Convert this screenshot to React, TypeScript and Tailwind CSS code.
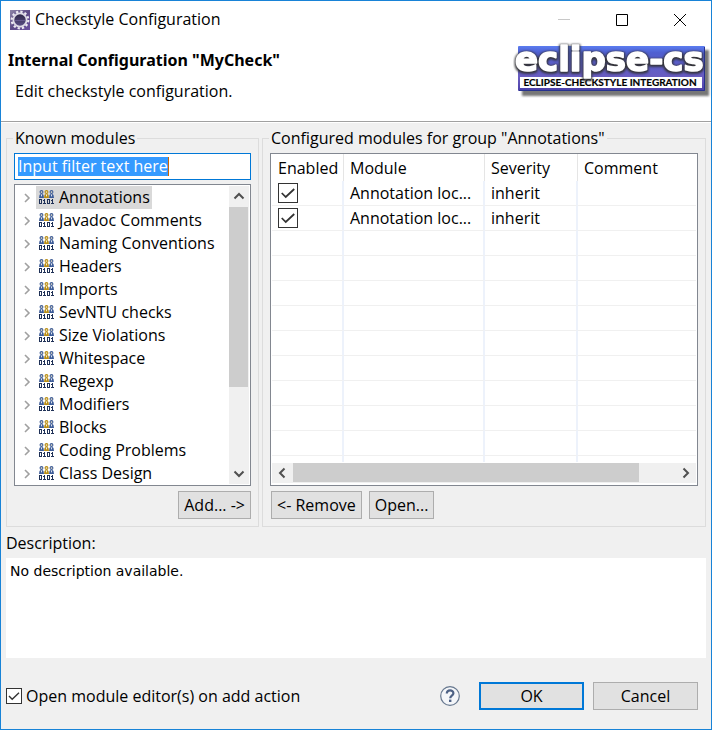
import { useEffect, useRef, useState } from 'react';

const MODULE_GROUPS = [
  'Annotations',
  'Javadoc Comments',
  'Naming Conventions',
  'Headers',
  'Imports',
  'SevNTU checks',
  'Size Violations',
  'Whitespace',
  'Regexp',
  'Modifiers',
  'Blocks',
  'Coding Problems',
  'Class Design',
];

interface ConfiguredModule {
  id: number;
  name: string;
  severity: string;
  comment: string;
  enabled: boolean;
}

const INITIAL_MODULES: ConfiguredModule[] = [
  { id: 1, name: 'Annotation loc...', severity: 'inherit', comment: '', enabled: true },
  { id: 2, name: 'Annotation loc...', severity: 'inherit', comment: '', enabled: true },
];

const EMPTY_ROWS = 10;

function Chevron({ className, d }: { className: string; d: string }) {
  return (
    <svg viewBox="0 0 12 12" className={className} fill="none" stroke="currentColor" aria-hidden="true">
      <path d={d} />
    </svg>
  );
}

function AppIcon() {
  return (
    <svg viewBox="0 0 20 20" className="w-5 h-5 shrink-0" aria-hidden="true">
      <defs>
        <linearGradient id="appBg" x1="0" y1="0" x2="1" y2="1">
          <stop offset="0" stopColor="#8f86a8" />
          <stop offset="0.5" stopColor="#5d4a86" />
          <stop offset="1" stopColor="#6b4fa0" />
        </linearGradient>
        <linearGradient id="appHole" x1="0" y1="0" x2="0" y2="1">
          <stop offset="0" stopColor="#2c2545" />
          <stop offset="1" stopColor="#5e5189" />
        </linearGradient>
      </defs>
      <rect width="20" height="20" fill="url(#appBg)" />
      <circle cx="10" cy="10" r="8.3" fill="none" stroke="#ece9f2" strokeWidth="2.2" strokeDasharray="2.3 2.05" />
      <circle cx="10" cy="10" r="6.6" fill="url(#appHole)" stroke="#dedae6" strokeWidth="1.8" />
      <path d="M5 10.5h10" stroke="#6d6096" strokeWidth="0.8" />
    </svg>
  );
}

function Logo() {
  return (
    <svg viewBox="0 0 198 60" className="w-[198px] h-[60px] shrink-0" role="img" aria-label="eclipse-cs">
      <defs>
        <linearGradient id="logoBg" x1="0" y1="0" x2="0" y2="1">
          <stop offset="0" stopColor="#5b7df0" />
          <stop offset="0.15" stopColor="#4f5fd0" />
          <stop offset="0.7" stopColor="#6a5cc0" />
          <stop offset="1" stopColor="#4a3fa8" />
        </linearGradient>
        <filter id="soft" x="-5%" y="-20%" width="110%" height="140%">
          <feGaussianBlur stdDeviation="0.9" />
        </filter>
        <filter id="glow" x="-5%" y="-20%" width="110%" height="140%" colorInterpolationFilters="sRGB">
          <feMorphology in="SourceAlpha" operator="dilate" radius="1" />
          <feOffset dx="0" dy="1" />
          <feGaussianBlur stdDeviation="0.8" />
          <feColorMatrix values="0 0 0 0 0.2  0 0 0 0 0.2  0 0 0 0 0.22  0 0 0 1 0" />
          <feMerge>
            <feMergeNode />
            <feMergeNode in="SourceGraphic" />
          </feMerge>
        </filter>
      </defs>
      <rect x="9" y="12" width="187" height="46" fill="#777" filter="url(#soft)" />
      <rect x="5" y="8" width="187" height="45" rx="1" fill="url(#logoBg)" />
      <path d="M6 52.5h185.5V9" fill="none" stroke="#26318f" />
      <rect x="7" y="39" width="182" height="11" fill="#fff" />
      <text
        x="97"
        y="48"
        textAnchor="middle"
        fontFamily="Lato, sans-serif"
        fontWeight="700"
        fontSize="10"
        fill="#000"
        stroke="#000"
        strokeWidth="0.2"
      >
        ECLIPSE-CHECKSTYLE INTEGRATION
      </text>
      <text
        x="2"
        y="33"
        fontFamily="DejaVu Sans, sans-serif"
        fontWeight="700"
        fontSize="34"
        fill="#fff"
        stroke="#fff"
        strokeWidth="1.6"
        strokeLinejoin="round"
        filter="url(#glow)"
      >
        eclipse-cs
      </text>
    </svg>
  );
}

// Three people standing over a row of binary digits
function ModuleGroupIcon() {
  const people = [
    { x: 2.5, color: '#3d5c98' },
    { x: 12.5, color: '#3d5c98' },
    { x: 7.5, color: '#b98d14' },
  ];

  return (
    <svg viewBox="0 0 15 15" className="w-[15px] h-[15px] shrink-0" aria-hidden="true">
      {people.map(({ x, color }) => (
        <g key={x} fill={color}>
          <path d={`M${x - 2.5} 8 L${x - 2} 5 L${x - 1} 4 h2 L${x + 2} 5 L${x + 2.5} 8z`} />
          <path d={`M${x - 0.7} 4.6 L${x} 7 L${x + 0.7} 4.6z`} fill="#fff" />
          <circle cx={x} cy="2" r="1.4" fill="#f3e9c8" stroke={color} strokeWidth="1.1" />
        </g>
      ))}
      <g fill="none" stroke="#1f3157" strokeWidth="1" shapeRendering="crispEdges">
        <rect x="0.5" y="9.5" width="2" height="4" />
        <path d="M4 10.5h1.5M5.5 9V14M4 13.5h3" />
        <rect x="8.5" y="9.5" width="2" height="4" />
        <path d="M12 10.5h1.5M13.5 9V14M12 13.5h3" />
      </g>
    </svg>
  );
}

interface CheckboxProps {
  id?: string;
  label?: string;
  checked: boolean;
  large?: boolean;
  onChange: () => void;
}

function Checkbox({ id, label, checked, large, onChange }: CheckboxProps) {
  return (
    <span className={`grid shrink-0 ${large ? 'w-5 h-5' : 'w-4 h-4'}`}>
      <input
        id={id}
        type="checkbox"
        aria-label={label}
        checked={checked}
        onChange={onChange}
        className="appearance-none [grid-area:1/1] w-full h-full bg-white border border-[#333]"
      />
      {checked && (
        <svg
          viewBox="0 0 16 16"
          className="[grid-area:1/1] w-full h-full pointer-events-none"
          fill="none"
          stroke="#333"
          strokeWidth="1.4"
          aria-hidden="true"
        >
          <path d="M3 8l3.2 3.2L13 4.8" />
        </svg>
      )}
    </span>
  );
}

const buttonClass = 'h-7 bg-[#e1e1e1] border border-[#adadad] whitespace-nowrap';
const headClass = 'h-[27px] pt-px pl-1.5 font-normal text-left border-r border-[#e5e5e5] bg-clip-padding';
const cellClass = 'h-[25px] pl-1.5 border-b border-b-[#f0f0f0] border-r-2 border-r-[#edf2fb] whitespace-nowrap';

export default function App() {
  const [filter, setFilter] = useState('Input filter text here');
  const [selected, setSelected] = useState('Annotations');
  const [modules, setModules] = useState(INITIAL_MODULES);
  const [openOnAdd, setOpenOnAdd] = useState(true);
  const filterRef = useRef<HTMLInputElement>(null);

  useEffect(() => {
    filterRef.current?.focus();
    filterRef.current?.select();
  }, []);

  const toggleModule = (id: number) => {
    setModules(modules.map((m) => (m.id === id ? { ...m, enabled: !m.enabled } : m)));
  };

  return (
    <div className="min-h-screen flex flex-col bg-[#f0f0f0] border border-[#1883d7] text-black text-base leading-[23px] font-['Open_Sans',sans-serif]">
      {/* Title bar */}
      <div className="flex items-center h-[37px] pl-[9px] pr-0.5 bg-white">
        <AppIcon />
        <span className="ml-[5px] flex-1">Checkstyle Configuration</span>
        <button aria-label="Minimize" className="w-[58px] h-full flex items-center justify-center text-[#c8c8c8]">
          <Chevron className="w-3 h-3" d="M0 5.5h12" />
        </button>
        <button aria-label="Maximize" className="w-[58px] h-full flex items-center justify-center">
          <Chevron className="w-3 h-3" d="M0.5 0.5h11v11h-11z" />
        </button>
        <button aria-label="Close" className="w-[58px] h-full flex items-center justify-center">
          <Chevron className="w-3 h-3" d="M0 0l12 12M12 0L0 12" />
        </button>
      </div>

      {/* Header */}
      <header className="flex items-start justify-between h-[84px] pl-[7px] bg-white border-b border-[#a0a0a0]">
        <div className="pt-[11px]">
          <h1 className="font-bold font-['Noto_Sans',sans-serif]">Internal Configuration "MyCheck"</h1>
          <p className="mt-2 pl-[7px]">Edit checkstyle configuration.</p>
        </div>
        <Logo />
      </header>

      <main className="flex flex-col px-[5px] pt-1 border-t border-white">
        <div className="flex gap-[3px]">
          {/* Known modules */}
          <fieldset className="w-[253px] shrink-0 border border-[#dcdcdc] px-[7px] pt-[3px] pb-[7px]">
            <legend className="-ml-px px-0.5">Known modules</legend>
            <div className="flex items-center h-[27px] px-[3px] bg-white border border-[#0078d7]">
              <input
                ref={filterRef}
                aria-label="Filter"
                value={filter}
                onChange={(e) => setFilter(e.target.value)}
                className="field-sizing-content h-[19px] leading-[19px] outline-none selection:bg-[#3399ff]/99 selection:text-white"
              />
              <span className="w-px h-[19px] bg-[#cc6600]"></span>
            </div>

            <div className="flex justify-between h-[302px] mt-1 bg-white border border-[#828790] overflow-hidden">
              <ul role="tree" aria-label="Known modules" className="pt-px">
                {MODULE_GROUPS.map((group) => (
                  <li
                    key={group}
                    role="treeitem"
                    aria-selected={selected === group}
                    onClick={() => setSelected(group)}
                    className="flex items-center h-[23px] pl-1.5"
                  >
                    <Chevron className="w-3 h-3 mr-[3px] text-[#a0a0a0] stroke-[1.6]" d="M4 2l4 4-4 4" />
                    <span
                      className={`flex items-center h-full gap-[5px] pl-[3px] pr-0.5 ${
                        selected === group ? 'bg-[#d9d9d9]' : ''
                      }`}
                    >
                      <ModuleGroupIcon />
                      {group}
                    </span>
                  </li>
                ))}
              </ul>
              <div className="flex flex-col w-5 my-px mr-px bg-[#f0f0f0] text-[#505050]">
                <Chevron className="w-3 h-[21px] mx-auto stroke-2" d="M1.5 8l4.5-4.5L10.5 8" />
                <div className="h-[180px] mr-px bg-[#cdcdcd]"></div>
                <Chevron className="w-3 h-[21px] mx-auto mt-auto stroke-2" d="M1.5 4L6 8.5 10.5 4" />
              </div>
            </div>

            <div className="flex justify-end mt-[5px]">
              <button className={`${buttonClass} px-[5px]`}>Add... -&gt;</button>
            </div>
          </fieldset>

          {/* Configured modules */}
          <fieldset className="flex-1 min-w-0 border border-[#dcdcdc] px-[7px] pt-[3px] pb-[7px]">
            <legend className="-ml-px px-0.5">Configured modules for group "Annotations"</legend>
            <div className="flex flex-col h-[333px] px-px pb-0.5 bg-white border border-[#828790]">
              <div className="flex-1 min-h-0 overflow-hidden">
                <table className="w-full table-fixed border-separate border-spacing-0">
                  <thead>
                    <tr>
                      <th className={`${headClass} w-[72px]`}>Enabled</th>
                      <th className={`${headClass} w-[141px]`}>Module</th>
                      <th className={`${headClass} w-[93px]`}>Severity</th>
                      <th className="h-[27px] pt-px pl-1.5 font-normal text-left">Comment</th>
                    </tr>
                  </thead>
                  <tbody>
                    {modules.map((module) => (
                      <tr key={module.id}>
                        <td className={cellClass}>
                          <Checkbox
                            large
                            label="Enabled"
                            checked={module.enabled}
                            onChange={() => toggleModule(module.id)}
                          />
                        </td>
                        <td className={cellClass}>{module.name}</td>
                        <td className={cellClass}>{module.severity}</td>
                        <td className="h-[25px] pl-1.5 border-b border-[#f0f0f0]">{module.comment}</td>
                      </tr>
                    ))}
                    {Array.from({ length: EMPTY_ROWS }, (_, i) => (
                      <tr key={i}>
                        <td className={cellClass}></td>
                        <td className={cellClass}></td>
                        <td className={cellClass}></td>
                        <td className="h-[25px] border-b border-[#f0f0f0]"></td>
                      </tr>
                    ))}
                  </tbody>
                </table>
              </div>
              <div className="flex items-center h-5 mt-px bg-[#f0f0f0] text-[#505050]">
                <Chevron className="w-[21px] h-3 stroke-2" d="M8 1.5L3.5 6 8 10.5" />
                <div className="w-[346px] h-[19px] mb-px bg-[#cdcdcd]"></div>
                <Chevron className="w-[21px] h-3 ml-auto stroke-2" d="M4 1.5L8.5 6 4 10.5" />
              </div>
            </div>

            <div className="flex gap-[7px] mt-[5px] pl-px">
              <button className={`${buttonClass} px-[5px]`}>&lt;- Remove</button>
              <button className={`${buttonClass} px-[5px]`}>Open...</button>
            </div>
          </fieldset>
        </div>

        {/* Description */}
        <h2 className="mt-[5px] h-[26px]">Description:</h2>
        <div className="h-[100px] px-1 py-0.5 bg-white font-['DejaVu_Sans',sans-serif] text-sm leading-[23px]">
          No description available.
        </div>
      </main>

      {/* Footer */}
      <footer className="flex items-center mt-6 pl-[5px] pr-[13px]">
        <Checkbox id="open-on-add" checked={openOnAdd} onChange={() => setOpenOnAdd(!openOnAdd)} />
        <label htmlFor="open-on-add" className="ml-1 flex-1">
          Open module editor(s) on add action
        </label>
        <button aria-label="Help" className="mr-[19px]">
          <svg viewBox="0 0 20 20" className="w-5 h-5" fill="none" aria-hidden="true">
            <circle cx="10" cy="10" r="9.3" fill="#f4f6f9" stroke="#67788f" strokeWidth="1.2" />
            <path d="M6.8 7.6c0-4.4 6.6-4.2 6.6-.4 0 2.4-3.2 2.6-3.2 5" stroke="#4d6185" strokeWidth="2.2" />
            <rect x="9" y="13.6" width="2.4" height="2.4" fill="#4d6185" />
          </svg>
        </button>
        <button className="w-[105px] h-7 mr-[9px] bg-[#e1e1e1] border-2 border-[#0078d7]">OK</button>
        <button className={`${buttonClass} w-[105px]`}>Cancel</button>
      </footer>
    </div>
  );
}
